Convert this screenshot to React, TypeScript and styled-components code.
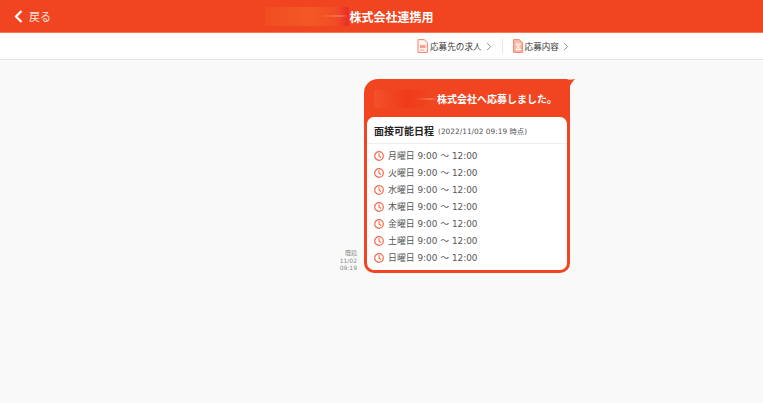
import styled, { createGlobalStyle } from 'styled-components'

const days = ['月', '火', '水', '木', '金', '土', '日']

const GlobalStyle = createGlobalStyle`
  html, body {
    margin: 0;
    padding: 0;
    height: 100%;
    background: #f9f9f9;
    font-family: "DejaVu Sans", "Noto Sans CJK JP", sans-serif;
    color: #333;
  }
`

const Page = styled.div`
  width: 763px;
  height: 403px;
  overflow: hidden;
  background: #f9f9f9;
`

const Header = styled.header`
  height: 32px;
  background: #f04520;
  border-bottom: 1px solid #f8775a;
  display: grid;
  grid-template-columns: 1fr auto 1fr;
  align-items: center;
`

const BackLink = styled.a`
  display: flex;
  align-items: center;
  gap: 6px;
  padding-left: 14px;
  font-size: 11px;
  color: #fde3dc;
`

const Title = styled.h1`
  margin: 0;
  display: flex;
  align-items: center;
  font-size: 12px;
  font-weight: 700;
  color: #fff;
  padding-right: 64px;
`

const Smudge = styled.span`
  position: relative;
  display: block;
  overflow: hidden;

  &::after {
    content: '';
    position: absolute;
    right: 0;
    top: 50%;
    width: 35%;
    height: 2px;
    margin-top: -1px;
    background: linear-gradient(90deg, rgba(255, 255, 255, 0), rgba(255, 190, 170, 0.35) 70%, rgba(255, 255, 255, 0));
  }
`

const HeaderSmudge = styled(Smudge)`
  width: 84px;
  height: 19px;
  background: linear-gradient(90deg, #f14d22 0%, #f25824 55%, #f24c26 85%, #ea3028 98%);
`

const SubNav = styled.nav`
  height: 26px;
  background: #fff;
  border-bottom: 1px solid #e4e4e4;
  display: flex;
  align-items: center;
  padding-left: 417px;
`

const NavItem = styled.a`
  display: flex;
  align-items: center;
  font-size: 8.6px;
  color: #3a3a3a;

  svg:first-child {
    margin-right: 2px;
  }

  svg:last-child {
    margin-left: 4px;
  }
`

const NavDivider = styled.span`
  width: 1px;
  height: 14px;
  background: #e6e6e6;
  margin: 0 10px 0 10px;
`

const Thread = styled.main`
  display: flex;
  align-items: flex-end;
  padding: 19px 0 0 339px;
  gap: 7px;
`

const Meta = styled.div`
  width: 18px;
  text-align: right;
  font-size: 6px;
  line-height: 7px;
  color: #888;
  padding-bottom: 2px;
`

const MetaState = styled.div`
  margin-bottom: 1px;
`

const Bubble = styled.section`
  position: relative;
  width: 206px;
  box-sizing: border-box;
  background: #f04520;
  border-radius: 14px 5px 10px 10px;
  padding: 0 3px 3px;
`

const Tail = styled.svg`
  position: absolute;
  top: 0;
  right: -5px;
`

const BubbleTitle = styled.div`
  height: 38px;
  display: flex;
  align-items: center;
  padding-left: 7px;
  font-size: 10px;
  font-weight: 700;
  color: #fff;
`

const TitleSmudge = styled(Smudge)`
  width: 63px;
  height: 18px;
  margin-top: 2px;
  background: linear-gradient(90deg, #f2502a 0%, #f03a18 55%, #ef4a22 100%);
`

const Card = styled.div`
  background: #fff;
  border-radius: 7px;
`

const CardHead = styled.div`
  height: 26px;
  display: flex;
  align-items: center;
  gap: 4px;
  padding-left: 7px;
  border-bottom: 1px solid #eee;
`

const CardTitle = styled.span`
  font-size: 10px;
  font-weight: 700;
  color: #222;
`

const CardStamp = styled.span`
  font-size: 7.4px;
  color: #555;
`

const SlotList = styled.ul`
  list-style: none;
  margin: 0;
  padding: 3px 0 4px 7px;
`

const Slot = styled.li`
  height: 17px;
  display: flex;
  align-items: center;
  gap: 4px;
  font-size: 8.9px;
  color: #555;
`

const ChevronSmall = () => (
  <svg width="6" height="9" viewBox="0 0 6 9">
    <path d="M1.2 1 4.7 4.5 1.2 8" fill="none" stroke="#888" strokeWidth="1" />
  </svg>
)

const JobIcon = () => (
  <svg width="11" height="14" viewBox="0 0 11 14">
    <path d="M1 .6h6.4L10.4 3.6v9.8H1z" fill="#fff3ef" stroke="#f6836a" />
    <path d="M3 6h5.5v3H3z" fill="#f8a28e" />
    <path d="M3 11h4" stroke="#f8a28e" />
  </svg>
)

const EntryIcon = () => (
  <svg width="10" height="14" viewBox="0 0 10 14">
    <path d="M.6.6h5.8l3 3v9.8H.6z" fill="#fbb9a8" stroke="#f6836a" />
    <path d="M2.5 5h5L2.9 10.6h5M3 5l4.6 5.6" fill="none" stroke="#fff" strokeWidth="1" />
  </svg>
)

const ClockIcon = () => (
  <svg width="10" height="10" viewBox="0 0 10 10">
    <circle cx="5" cy="5" r="4.3" fill="none" stroke="#f4694a" strokeWidth="1.2" />
    <path d="M5 2.2V5l2 1.5" fill="none" stroke="#f4694a" strokeWidth="1.1" />
  </svg>
)

export default function App() {
  return (
    <Page>
      <GlobalStyle />
      <Header>
        <BackLink>
          <svg width="9" height="13" viewBox="0 0 9 13">
            <path d="M7.5 1 2 6.5 7.5 12" fill="none" stroke="#fff" strokeWidth="2.2" />
          </svg>
          戻る
        </BackLink>
        <Title>
          <HeaderSmudge />
          株式会社連携用
        </Title>
      </Header>
      <SubNav>
        <NavItem>
          <JobIcon />
          応募先の求人
          <ChevronSmall />
        </NavItem>
        <NavDivider />
        <NavItem>
          <EntryIcon />
          応募内容
          <ChevronSmall />
        </NavItem>
      </SubNav>
      <Thread>
        <Meta>
          <MetaState>既読</MetaState>
          11/02
          <br />
          09:19
        </Meta>
        <Bubble>
          <Tail width="10" height="8" viewBox="0 0 10 8">
            <path d="M0 0h1.5q2 1 3 .8Q7 .6 10 0 8 2 7 3.5 6 5 5 7H0z" fill="#f04520" />
          </Tail>
          <BubbleTitle>
            <TitleSmudge />
            株式会社へ応募しました。
          </BubbleTitle>
          <Card>
            <CardHead>
              <CardTitle>面接可能日程</CardTitle>
              <CardStamp>(2022/11/02 09:19 時点)</CardStamp>
            </CardHead>
            <SlotList>
              {days.map((d) => (
                <Slot key={d}>
                  <ClockIcon />
                  {d}曜日 9:00 ～ 12:00
                </Slot>
              ))}
            </SlotList>
          </Card>
        </Bubble>
      </Thread>
    </Page>
  )
}
